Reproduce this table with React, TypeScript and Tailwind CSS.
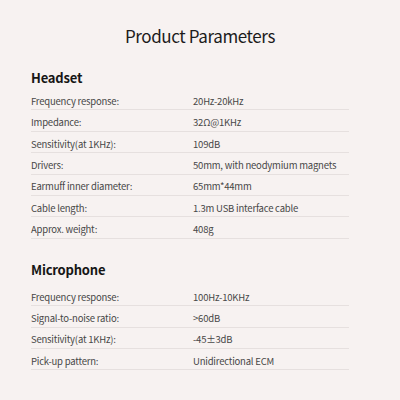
const HEADSET: [string, string][] = [
  ["Frequency response:", "20Hz-20kHz"],
  ["Impedance:", "32Ω@1KHz"],
  ["Sensitivity(at 1KHz):", "109dB"],
  ["Drivers:", "50mm, with neodymium magnets"],
  ["Earmuff inner diameter:", "65mm*44mm"],
  ["Cable length:", "1.3m USB interface cable"],
  ["Approx. weight:", "408g"],
];

const MICROPHONE: [string, string][] = [
  ["Frequency response:", "100Hz-10KHz"],
  ["Signal-to-noise ratio:", ">60dB"],
  ["Sensitivity(at 1KHz):", "-45±3dB"],
  ["Pick-up pattern:", "Unidirectional ECM"],
];

function Section({
  title,
  rows,
  className,
  listClass,
}: {
  title: string;
  rows: [string, string][];
  className?: string;
  listClass?: string;
}) {
  return (
    <section className={className}>
      <h2 className="text-[13px] leading-[13px] font-bold tracking-[-0.2px] text-[#161616]">{title}</h2>
      <div className={listClass}>
        {rows.map(([label, value]) => (
          <div
            key={label}
            className="flex h-[21.4px] items-end border-b border-[#e6e0df] pb-[3px] text-[9.5px] leading-[9.5px] tracking-[-0.2px] text-[#474747]"
          >
            <span className="w-[162px] shrink-0">{label}</span>
            <span className="whitespace-nowrap">{value}</span>
          </div>
        ))}
      </div>
    </section>
  );
}

export default function App() {
  return (
    <div className="h-[400px] w-[400px] overflow-hidden bg-[#f7f2f1] font-['Noto_Sans_CJK_SC','Noto_Sans',sans-serif]">
      <h1 className="pt-[27px] text-center text-[17px] leading-[17px] font-normal tracking-[-0.4px] text-[#1c1c1c]">
        Product Parameters
      </h1>
      <div className="mx-[31px] mt-[27px] w-[318px]">
        <Section title="Headset" rows={HEADSET} listClass="mt-[5px]" />
        <Section title="Microphone" rows={MICROPHONE} className="mt-[24px]" listClass="mt-[9px]" />
      </div>
    </div>
  );
}
